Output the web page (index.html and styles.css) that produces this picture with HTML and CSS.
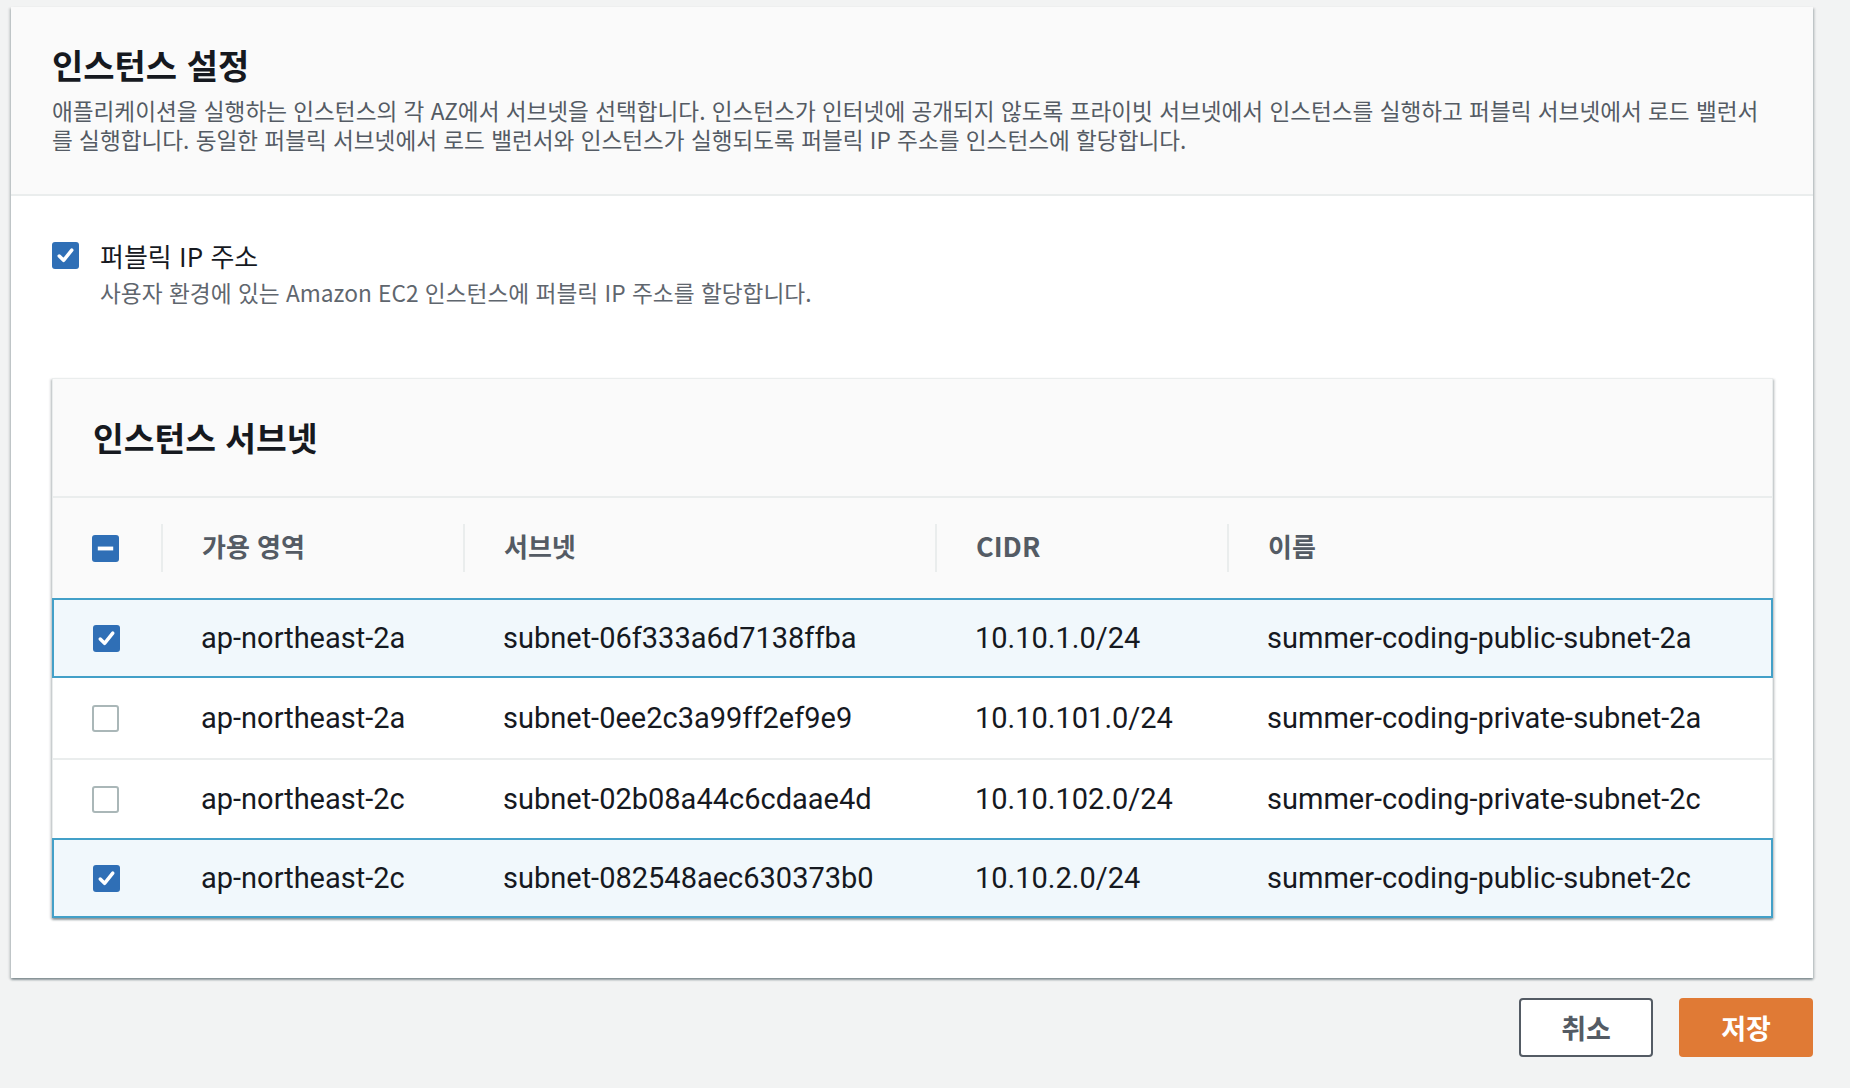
FILE: index.html
```html
<!DOCTYPE html>
<html lang="ko">
<head>
<meta charset="utf-8">
<title>인스턴스 설정</title>
<link rel="stylesheet" href="styles.css">
</head>
<body>
<div class="page">
  <section class="card">
    <header class="card-head">
      <h2 class="card-title">인스턴스 설정</h2>
      <p class="card-desc">애플리케이션을 실행하는 인스턴스의 각 AZ에서 서브넷을 선택합니다. 인스턴스가 인터넷에 공개되지 않도록 프라이빗 서브넷에서 인스턴스를 실행하고 퍼블릭 서브넷에서 로드 밸런서를 실행합니다. 동일한 퍼블릭 서브넷에서 로드 밸런서와 인스턴스가 실행되도록 퍼블릭 IP 주소를 인스턴스에 할당합니다.</p>
    </header>
    <div class="card-body">
      <div class="check-field">
        <span class="cb cb-on"><svg viewBox="0 0 28 28"><path d="M7.5 14.5 L12 19 L20.5 8.5" fill="none" stroke="#fff" stroke-width="3.6" stroke-linecap="round" stroke-linejoin="round"/></svg></span>
        <div class="cf-text">
          <div class="cf-label">퍼블릭 IP 주소</div>
          <div class="cf-desc">사용자 환경에 있는 Amazon EC2 인스턴스에 퍼블릭 IP 주소를 할당합니다.</div>
        </div>
      </div>

      <div class="table-box">
        <div class="tb-head"><h3 class="tb-title">인스턴스 서브넷</h3></div>
        <div class="grid-row col-head">
          <div class="cell cell-cb"><span class="cb cb-on"><svg viewBox="0 0 28 28"><rect x="6" y="12" width="16" height="4" fill="#fff"/></svg></span></div>
          <div class="cell th">가용 영역</div>
          <div class="cell th">서브넷</div>
          <div class="cell th th-latin">CIDR</div>
          <div class="cell th">이름</div>
        </div>
        <div class="grid-row sel">
          <div class="cell cell-cb"><span class="cb cb-on"><svg viewBox="0 0 28 28"><path d="M7.5 14.5 L12 19 L20.5 8.5" fill="none" stroke="#fff" stroke-width="3.6" stroke-linecap="round" stroke-linejoin="round"/></svg></span></div>
          <div class="cell">ap-northeast-2a</div>
          <div class="cell">subnet-06f333a6d7138ffba</div>
          <div class="cell">10.10.1.0/24</div>
          <div class="cell">summer-coding-public-subnet-2a</div>
        </div>
        <div class="grid-row">
          <div class="cell cell-cb"><span class="cb"></span></div>
          <div class="cell">ap-northeast-2a</div>
          <div class="cell">subnet-0ee2c3a99ff2ef9e9</div>
          <div class="cell">10.10.101.0/24</div>
          <div class="cell">summer-coding-private-subnet-2a</div>
        </div>
        <div class="grid-row">
          <div class="cell cell-cb"><span class="cb"></span></div>
          <div class="cell">ap-northeast-2c</div>
          <div class="cell">subnet-02b08a44c6cdaae4d</div>
          <div class="cell">10.10.102.0/24</div>
          <div class="cell">summer-coding-private-subnet-2c</div>
        </div>
        <div class="grid-row sel">
          <div class="cell cell-cb"><span class="cb cb-on"><svg viewBox="0 0 28 28"><path d="M7.5 14.5 L12 19 L20.5 8.5" fill="none" stroke="#fff" stroke-width="3.6" stroke-linecap="round" stroke-linejoin="round"/></svg></span></div>
          <div class="cell">ap-northeast-2c</div>
          <div class="cell">subnet-082548aec630373b0</div>
          <div class="cell">10.10.2.0/24</div>
          <div class="cell">summer-coding-public-subnet-2c</div>
        </div>
      </div>
    </div>
  </section>
  <div class="actions">
    <button class="btn btn-cancel">취소</button>
    <button class="btn btn-save">저장</button>
  </div>
</div>
</body>
</html>
```
FILE: styles.css
```css
* { box-sizing: border-box; }
html, body { margin: 0; padding: 0; }
body {
  background: #f2f3f3;
  font-family: Roboto, "Noto Sans CJK KR", sans-serif;
  color: #16191f;
  width: 1850px;
  height: 1088px;
  overflow: hidden;
}
.page {
  padding: 7px 0 0 11px;
  width: 1813px;
}
.card {
  background: #fff;
  box-shadow: 0 2px 2px rgba(0,28,36,.35), 2px 1px 2px rgba(0,28,36,.12), -2px 1px 2px rgba(0,28,36,.12);
}
.card-head {
  background: #fafafa;
  border-bottom: 2px solid #eaeded;
  padding: 38px 40px 40px 41px;
}
.card-title {
  margin: 0;
  font-family: "Noto Sans CJK KR", sans-serif;
  font-weight: 700;
  font-size: 34px;
  line-height: 40px;
}
.card-desc {
  margin: 11px 0 0;
  font-family: "Noto Sans CJK KR", sans-serif;
  font-size: 22.6px;
  line-height: 29px;
  color: #545b64;
}
.card-body {
  padding: 44px 40px 60px 41px;
}
.check-field {
  display: flex;
  gap: 21px;
}
.check-field > .cb { margin-top: 2px; }
.cb {
  display: block;
  width: 27px;
  height: 27px;
  border-radius: 3px;
  border: 2px solid #aab7b8;
  background: #fff;
  flex: none;
}
.cb svg { display: block; width: 100%; height: 100%; }
.cb-on {
  border: none;
  background: #2f6fb6;
}
.cf-label {
  font-family: "Noto Sans CJK KR", sans-serif;
  font-size: 26px;
  line-height: 32px;
}
.cf-desc {
  font-family: "Noto Sans CJK KR", sans-serif;
  font-size: 22.7px;
  line-height: 42px;
  color: #5f666e;
}
.table-box {
  margin-top: 64px;
  border: 1px solid #eaeded;
  border-bottom: none;
  box-shadow: 0 2px 2px rgba(0,28,36,.35), 2px 1px 2px rgba(0,28,36,.12), -2px 1px 2px rgba(0,28,36,.12);
  background: #fff;
}
.tb-head {
  background: #fafafa;
  border-bottom: 2px solid #eaeded;
  height: 119px;
  padding: 0 40px 3px;
  display: flex;
  align-items: center;
}
.tb-title {
  margin: 0;
  font-family: "Noto Sans CJK KR", sans-serif;
  font-weight: 700;
  font-size: 33.4px;
}
.grid-row {
  display: grid;
  grid-template-columns: 108px 302px 472px 292px 1fr;
  height: 80px;
  align-items: center;
  border-top: 2px solid #eaeded;
  font-size: 29px;
}
.col-head {
  height: 100px;
  border-top: none;
  background: #fafafa;
}
.grid-row.sel {
  grid-template-columns: 107px 302px 472px 292px 1fr;
  background: #f1f8fc;
  border: 2px solid #43a0c8;
  margin: 0 -1px;
}
.grid-row.sel + .grid-row { border-top: none; }
.cell {
  padding-left: 40px;
  position: relative;
  white-space: nowrap;
}
.cell-cb { padding-left: 39px; }
.th {
  font-family: "Noto Sans CJK KR", sans-serif;
  font-weight: 700;
  font-size: 26px;
  color: #545b64;
  height: 100%;
  display: flex;
  align-items: center;
  padding-left: 41px;
  padding-bottom: 5px;
}
.th-latin { font-size: 27px; }
.th::before {
  content: "";
  position: absolute;
  left: 0;
  top: 26px;
  bottom: 26px;
  width: 2px;
  background: #eaeded;
}
.actions {
  display: flex;
  justify-content: flex-end;
  gap: 26px;
  margin-top: 20px;
}
.btn {
  width: 134px;
  height: 59px;
  border-radius: 4px;
  font-family: "Noto Sans CJK KR", sans-serif;
  font-weight: 700;
  font-size: 27px;
  padding: 0;
  cursor: pointer;
}
.btn-cancel {
  background: #fff;
  border: 2px solid #545b64;
  color: #545b64;
}
.btn-save {
  background: #e07a35;
  border: none;
  color: #fff;
}
```
